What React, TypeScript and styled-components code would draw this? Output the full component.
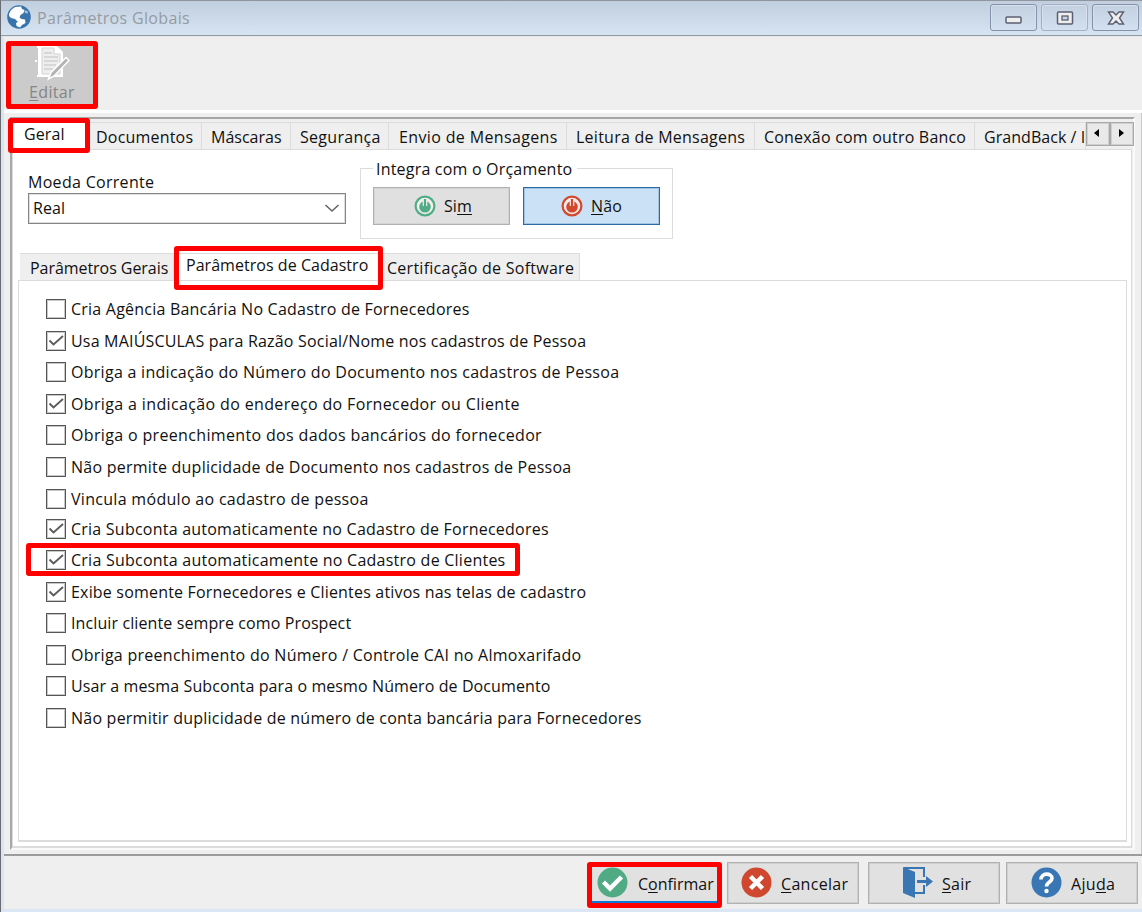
import React from "react";
import styled, { createGlobalStyle } from "styled-components";

const Global = createGlobalStyle`
  *{box-sizing:border-box}
  body{margin:0;overflow:hidden;background:#efefef;font-family:"Open Sans","Noto Sans",sans-serif;font-size:16px;color:#111}
  u{text-underline-offset:2px;text-decoration-thickness:1px}
`;

const Window = styled.div`
  position:relative;width:1142px;height:912px;display:flex;flex-direction:column;background:#efefef;
  border-left:1px solid #696c70;border-top:1px solid #8f969f;overflow:hidden;
`;
const TitleBar = styled.header`
  height:35px;flex:none;display:flex;align-items:flex-start;padding-left:6px;
  background:linear-gradient(#c0cede,#d7e4f2);border-bottom:1px solid #929ba6;
`;
const Title = styled.h1`
  margin:6px 0 0 6px;font-size:16px;line-height:22px;font-weight:400;color:#969ba2;letter-spacing:.33px;flex:1;
`;
const TitleIcon = styled.div`margin-top:4px;height:24px;`;
const WinButtons = styled.div`display:flex;gap:4px;padding:3px 3px 0 0;`;
const WinButton = styled.button<{ $soft?: boolean }>`
  width:47px;height:27px;padding:0;display:grid;place-items:center;border-radius:3px;
  border:1px solid ${p => (p.$soft ? "#a3b0c0" : "#8590ab")};
  background:linear-gradient(#c3d0e0,#d3e0ef);box-shadow:inset 0 0 0 1px #d6e1ed;
`;
const Main = styled.div`flex:1;display:flex;flex-direction:column;border-left:3px solid #dbe5f2;min-height:0;`;
const Toolbar = styled.div`height:74px;flex:none;padding:5px 0 0 3px;border-top:1px solid #e6e6e6;`;
const EditButton = styled.button`
  width:90px;height:64px;border:0;background:#cbcbcb;color:#858585;font:inherit;padding:2px 0 0;
  display:flex;flex-direction:column;align-items:center;line-height:20px;letter-spacing:.35px;
`;
const Highlight = styled.div`height:3px;flex:none;background:#fff;`;
const Body = styled.div`flex:1;min-height:0;padding:4px 6px 5px 6px;border-right:1px solid #c9c9c9;`;
const Outer = styled.div`
  height:733px;display:flex;flex-direction:column;border-left:2px solid #a8a8a8;border-top:2px solid #a6a6a6;
  border-right:2px solid #fafafa;border-bottom:2px solid #fafafa;padding:3px 1px 0 0;
`;
const Tabs = styled.div`position:relative;display:flex;height:27px;flex:none;padding-left:2px;`;
const Tab = styled.div<{ $w: number; $pad?: number; $ls?: number; $active?: boolean }>`
  width:${p => p.$w}px;flex:none;padding:${p => (p.$active ? 0 : 3)}px 0 0 ${p => p.$pad ?? 9}px;line-height:22px;
  letter-spacing:${p => p.$ls ?? 0.3}px;white-space:nowrap;
  border-top:1px solid #dcdcdc;border-right:1px solid #dcdcdc;background:${p => (p.$active ? "#fff" : "#efefef")};
`;
const Scroll = styled.div`display:flex;position:absolute;right:-2px;top:0;`;
const ScrollButton = styled.button`
  width:24px;height:24px;border:1px solid #a9a9a9;box-shadow:inset 0 0 0 1px #cfcfcf;background:#e9e9e9;padding:0 2px 2px 0;display:grid;place-items:center;
`;
const Page = styled.div`flex:1;min-height:0;background:#fff;border:1px solid #dcdcdc;border-bottom-width:2px;padding:0 4px 4px 5px;display:flex;flex-direction:column;`;
const Settings = styled.div`height:103px;flex:none;display:flex;padding-left:10px;`;
const Field = styled.div`width:318px;padding-top:22px;letter-spacing:.3px;line-height:21px;`;
const Select = styled.div`
  height:31px;border:1px solid #858585;box-shadow:inset 0 0 0 1px #dedede;display:flex;align-items:center;justify-content:space-between;padding:0 5px 1px 4px;letter-spacing:.1px;
`;
const Group = styled.fieldset`
  margin:7px 0 0 14px;width:313px;height:82px;border:1px solid #dcdcdc;padding:0 12px;
`;
const Legend = styled.legend`padding:2px 5px 0 3px;line-height:21px;letter-spacing:.2px;`;
const Choices = styled.div`display:flex;gap:13px;padding-top:7px;`;
const Choice = styled.button<{ $on?: boolean }>`
  width:137px;height:38px;border:1px solid ${p => (p.$on ? "#2b6aa6" : "#b0b0b0")};
  box-shadow:inset 0 0 0 1px ${p => (p.$on ? "#a0c3e4" : "#d4d4d4")};
  background:${p => (p.$on ? "#cbe2f6" : "#e0e0e0")};display:flex;align-items:center;padding:0 0 0 ${p => (p.$on ? 37 : 40)}px;gap:8px;font:inherit;color:inherit;letter-spacing:.1px;
`;
const List = styled.div`flex:1;border:1px solid #dcdcdc;border-bottom-width:2px;padding:12.5px 0 0 27px;`;
const CheckRow = styled.label<{ $tight?: boolean }>`
  display:flex;align-items:center;height:31.55px;margin-top:${p => (p.$tight ? -1.5 : 0)}px;white-space:nowrap;gap:5px;
`;
const Box = styled.span`width:20px;height:20px;flex:none;border:1px solid #555;box-shadow:inset 0 0 0 1px #c8c8c8;display:grid;place-items:center;`;
const CheckText = styled.span<{ $ls: number }>`letter-spacing:${p => p.$ls}px;line-height:22px;`;
const Footer = styled.footer`
  height:55px;flex:none;border-top:2px solid #9c9c9c;padding:6px 4px 0 0;display:flex;justify-content:flex-end;align-items:flex-start;
`;
const FooterButton = styled.button<{ $pad: number; $gap: number; $after?: number; $ls?: number; $default?: boolean }>`
  width:132px;height:42px;margin-right:${p => p.$after ?? 0}px;background:#e1e1e1;border:1px solid #b1b1b1;box-shadow:inset 0 0 0 1px #cfcfcf;
  padding:1px 0 0 ${p => p.$pad}px;display:flex;align-items:center;gap:${p => p.$gap}px;font:inherit;color:inherit;letter-spacing:${p => p.$ls ?? 0.3}px;white-space:nowrap;
  ${p => p.$default && "width:131px;height:41px;border:2px solid #0b78d7;border-left:0;border-top:0;box-shadow:none;padding-top:5px;"}
  & > svg{margin-top:${p => (p.$default ? -3 : -2)}px;flex:none}
`;
const BottomEdge = styled.div`height:3px;flex:none;background:#dbe6f4;`;
const Mark = styled.div<{ $x: number; $y: number; $w: number; $h: number }>`
  position:absolute;left:${p => p.$x - 1}px;top:${p => p.$y - 1}px;width:${p => p.$w}px;height:${p => p.$h}px;
  border:5px solid #f00;border-radius:3px;pointer-events:none;
`;

const Globe = () => (
  <svg width="24" height="24" viewBox="0 0 24 24"><circle cx="12" cy="12" r="11.8" fill="#3974aa" />
    <path d="M2 9L4 5 8 2 14 1.500 15 4 17.500 5 16.500 8 13.500 10 12.500 12.500 14.500 14 18 14.500 18.500 18 15 20 13 22.500 9.500 21 9 18 11 17 8 14 4 13 2 11Z" fill="#fff" />
    <path d="M17.500 5.500L20.500 6 21 8.500 18 8Z" fill="#a9c6df" /></svg>
);
const Power = ({ color }: { color: string }) => (
  <svg width="22" height="22" viewBox="0 0 22 22"><circle cx="11" cy="11" r="9.4" fill="#f6ece8" stroke={color} strokeWidth="2.200" />
    <circle cx="11" cy="11.800" r="5.800" fill={color} /><path d="M11 3.500V11" stroke="#f6ece8" strokeWidth="4.600" /><path d="M11 4V12" stroke={color} strokeWidth="2.200" /></svg>
);
const EditIcon = () => (
  <svg width="36" height="38" viewBox="0 0 36 38" fill="none"><path d="M3 3H7V32H3M3 17H1" stroke="#fff" strokeWidth="2" />
    <path d="M4 1H22L29 8V33H4Z" fill="#fff" /><path d="M8 4H20V10H26V30H8Z" fill="#eee" stroke="#d2d2d2" />
    <path d="M10 9H18M10 13H24M10 17H24M10 21H22M10 25H19" stroke="#cfcfcf" strokeWidth="1.6" />
    <path d="M14.500 35L17 28.500 32 13.500 35 16.500 20 32Z" fill="#b3b3b3" stroke="#fff" strokeWidth="1.5" /></svg>
);
const Check = () => <svg width="18" height="18" viewBox="0 0 18 18"><path d="M2.500 8.500L6.500 12.500 16 4" fill="none" stroke="#5c5c5c" strokeWidth="1.900" /></svg>;

const options: [string, boolean, number][] = [
  ["Cria Agência Bancária No Cadastro de Fornecedores", false, 0.22],
  ["Usa MAIÚSCULAS para Razão Social/Nome nos cadastros de Pessoa", true, 0.19],
  ["Obriga a indicação do Número do Documento nos cadastros de Pessoa", false, 0.28],
  ["Obriga a indicação do endereço do Fornecedor ou Cliente", true, 0.36],
  ["Obriga o preenchimento dos dados bancários do fornecedor", false, 0.345],
  ["Não permite duplicidade de Documento nos cadastros de Pessoa", false, 0.235],
  ["Vincula módulo ao cadastro de pessoa", false, 0.3],
  ["Cria Subconta automaticamente no Cadastro de Fornecedores", true, 0.23],
  ["Cria Subconta automaticamente no Cadastro de Clientes", true, 0.245],
  ["Exibe somente Fornecedores e Clientes ativos nas telas de cadastro", true, 0.19],
  ["Incluir cliente sempre como Prospect", false, 0.11],
  ["Obriga preenchimento do Número / Controle CAI no Almoxarifado", false, 0.27],
  ["Usar a mesma Subconta para o mesmo Número de Documento", false, 0.1],
  ["Não permitir duplicidade de número de conta bancária para Fornecedores", false, 0.225],
];

export default function App() {
  return (
    <Window>
      <Global />
      <TitleBar>
        <TitleIcon><Globe /></TitleIcon>
        <Title>Parâmetros Globais</Title>
        <WinButtons>
          <WinButton><svg width="18" height="14"><rect x="1" y="6" width="15" height="6" rx="1" fill="#eee" stroke="#5b5f70" strokeWidth="1.5" /></svg></WinButton>
          <WinButton $soft><svg width="18" height="14"><rect x="1.5" y="1" width="15" height="12" rx="1" fill="#eee" stroke="#5b5f70" strokeWidth="1.5" /><rect x="6" y="5" width="6" height="4" fill="#c9d6e5" stroke="#5b5f70" strokeWidth="1.3" /></svg></WinButton>
          <WinButton><svg width="18" height="14"><path d="M1.5 1H6L9 4 12 1H16.500L12.500 7 16.500 13H12L9 10 6 13H1.500L5.500 7Z" fill="#eee" stroke="#5b5f70" strokeWidth="1.4" /></svg></WinButton>
        </WinButtons>
      </TitleBar>
      <Main>
        <Toolbar><EditButton><EditIcon /><span><u>E</u>ditar</span></EditButton></Toolbar>
        <Highlight />
        <Body>
          <Outer>
            <Tabs>
              <Tab $w={76} $pad={10} $ls={0.1} $active>Geral</Tab>
              <Tab $w={112} $pad={6} $ls={0.2}>Documentos</Tab>
              <Tab $w={89} $pad={9} $ls={0}>Máscaras</Tab>
              <Tab $w={98} $pad={9}>Segurança</Tab>
              <Tab $w={178} $pad={10} $ls={0.36}>Envio de Mensagens</Tab>
              <Tab $w={188} $pad={9} $ls={0.25}>Leitura de Mensagens</Tab>
              <Tab $w={220} $pad={9} $ls={0.2}>Conexão com outro Banco</Tab>
              <Tab $w={111} $pad={9} $ls={0.05}>GrandBack / I</Tab>
              <Scroll>
                <ScrollButton><svg width="8" height="10"><path d="M6 1V9L1 5Z" /></svg></ScrollButton>
                <ScrollButton><svg width="8" height="10"><path d="M2 1V9L7 5Z" /></svg></ScrollButton>
              </Scroll>
            </Tabs>
            <Page>
              <Settings>
                <Field>Moeda Corrente
                  <Select>Real<svg width="16" height="10"><path d="M1.500 2L8 8 14.500 2" fill="none" stroke="#666" strokeWidth="1.6" /></svg></Select>
                </Field>
                <Group>
                  <Legend>Integra com o Orçamento</Legend>
                  <Choices>
                    <Choice><Power color="#4fae87" /><span>Si<u>m</u></span></Choice>
                    <Choice $on><Power color="#d2492f" /><span><u>N</u>ão</span></Choice>
                  </Choices>
                </Group>
              </Settings>
              <Tabs>
                <Tab $w={154} $pad={10} $ls={-0.05}>Parâmetros Gerais</Tab>
                <Tab $w={208} $pad={12} $ls={0.04} $active>Parâmetros de Cadastro</Tab>
                <Tab $w={198} $pad={5} $ls={0.26}>Certificação de Software</Tab>
              </Tabs>
              <List>
                {options.map(([text, on, ls], i) => (
                  <CheckRow key={text} $tight={i === 7}><Box>{on && <Check />}</Box><CheckText $ls={ls}>{text}</CheckText></CheckRow>
                ))}
              </List>
            </Page>
          </Outer>
        </Body>
        <Footer>
          <FooterButton $pad={9} $gap={10} $after={8} $ls={0} $default>
            <svg width="31" height="31" viewBox="0 0 31 31"><circle cx="15.500" cy="15.500" r="15" fill="#50aa84" /><path d="M6.500 15L13 21.500 24.500 10" fill="none" stroke="#fff" strokeWidth="4.500" /></svg>
            <span>C<u>o</u>nfirmar</span>
          </FooterButton>
          <FooterButton $pad={13} $gap={9} $after={9}>
            <svg width="31" height="31" viewBox="0 0 31 31"><circle cx="15.500" cy="15.500" r="15" fill="#cf472e" /><path d="M9.500 9.500L21.500 21.500M21.500 9.500L9.500 21.500" stroke="#fff" strokeWidth="4.500" /></svg>
            <span><u>C</u>ancelar</span>
          </FooterButton>
          <FooterButton $pad={33} $gap={9} $after={6}>
            <svg width="31" height="33" viewBox="0 0 31 33"><path d="M2 2H22V11M22 19V27H13" fill="none" stroke="#3876b4" strokeWidth="2" /><path d="M1 1L13 6V32L1 27ZM15 14H24V10L31 15.500 24 21V17H15Z" fill="#3876b4" /></svg>
            <span><u>S</u>air</span>
          </FooterButton>
          <FooterButton $pad={24} $gap={9}>
            <svg width="31" height="31" viewBox="0 0 31 31"><circle cx="15.500" cy="15.500" r="15" fill="#3876b4" /><path d="M10 12.500C10 5.500 21 5.500 21 11.500C21 15 15.500 15 15.500 19.500" fill="none" stroke="#fff" strokeWidth="3.600" /><circle cx="15.500" cy="24" r="2.200" fill="#fff" /></svg>
            <span>Aju<u>d</u>a</span>
          </FooterButton>
        </Footer>
        <BottomEdge />
      </Main>
      <Mark $x={6} $y={41} $w={92} $h={68} />
      <Mark $x={8} $y={118} $w={82} $h={35} />
      <Mark $x={174} $y={246} $w={209} $h={44} />
      <Mark $x={26} $y={543} $w={494} $h={33} />
      <Mark $x={587} $y={862} $w={135} $h={46} />
    </Window>
  );
}
